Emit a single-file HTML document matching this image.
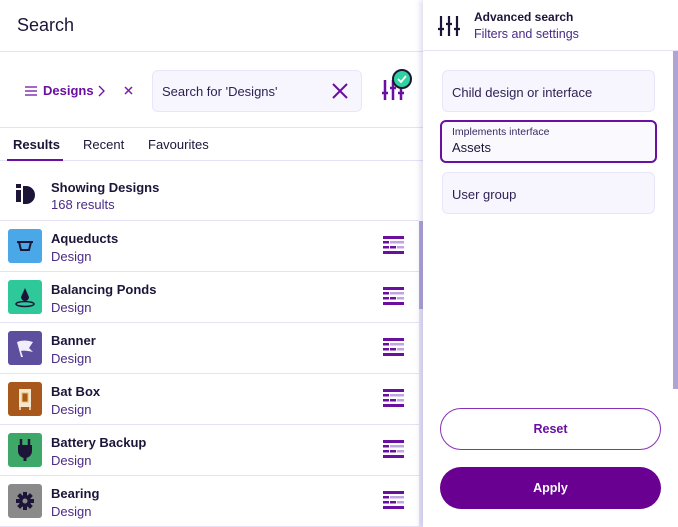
<!DOCTYPE html>
<html><head><style>
*{box-sizing:border-box;margin:0;padding:0}
body{width:678px;height:527px;overflow:hidden;background:#fff;font-family:"Liberation Sans",sans-serif;color:#1d1538;position:relative}
.abs{position:absolute}
.row{position:absolute;left:0;width:419px;height:51px;border-bottom:1px solid #e6e2f5}
.ic{position:absolute;left:8px;top:8px;width:34px;height:34px;border-radius:3px;display:flex;align-items:center;justify-content:center}
.nm{position:absolute;left:51px;top:10px;font-size:13px;font-weight:bold;color:#1d1538}
.ds{position:absolute;left:51px;top:28px;font-size:13px;color:#4a2a86}
.card{position:absolute;left:442px;width:213px;height:42px;background:#f7f6fe;border:1px solid #e8e6f8;border-radius:6px;font-size:13px;color:#2c1f52;padding:14px 9px}
</style></head><body>
<div class="abs" style="left:17px;top:15px;font-size:18px">Search</div>
<div class="abs" style="left:0;top:51px;width:423px;height:1px;background:#e6e2f5"></div>
<svg class="abs" style="left:25px;top:86px" width="12" height="10"><path d="M0 1H12M0 5H12M0 9H12" stroke="#6a0fa0" stroke-width="1.3"/></svg>
<div class="abs" style="left:43px;top:83px;font-size:13px;color:#6a0fa0;font-weight:bold">Designs</div>
<svg class="abs" style="left:98px;top:85px" width="8" height="12"><path d="M1 1L6 6L1 11" stroke="#6a0fa0" stroke-width="1.3" fill="none"/></svg>
<svg class="abs" style="left:124px;top:86px" width="9" height="9"><path d="M1 1L8 8M8 1L1 8" stroke="#7a1aa8" stroke-width="1.5"/></svg>
<div class="abs" style="left:152px;top:70px;width:210px;height:42px;background:#f7f6fe;border:1px solid #e8e6f8;border-radius:6px;font-size:13px;color:#2c1f52;padding:13px 9px">Search for 'Designs'</div>
<svg class="abs" style="left:331px;top:82px" width="18" height="18"><path d="M2 2L16 16M16 2L2 16" stroke="#6a0fa0" stroke-width="2"/></svg>
<svg class="abs" style="left:381px;top:76px" width="26" height="26"><g stroke="#6a0fa0" stroke-width="2.5"><path d="M4 4V24M12 4V24M20 4V24"/><path d="M1 17H7M9 12H15M17 17H23"/></g></svg>
<div class="abs" style="left:392px;top:69px;width:20px;height:20px;border-radius:50%;background:#2ed3a0;border:2px solid #1d1538"></div>
<svg class="abs" style="left:397px;top:74px" width="10" height="10"><path d="M1 5L4 8L9 2" stroke="#fff" stroke-width="1.8" fill="none"/></svg>
<div class="abs" style="left:0;top:127px;width:423px;height:1px;background:#e6e2f5"></div>
<div class="abs" style="left:13px;top:137px;font-size:13px;font-weight:bold">Results</div>
<div class="abs" style="left:83px;top:137px;font-size:13px">Recent</div>
<div class="abs" style="left:148px;top:137px;font-size:13px">Favourites</div>
<div class="abs" style="left:0;top:160px;width:423px;height:1px;background:#e6e2f5"></div>
<div class="abs" style="left:7px;top:159px;width:56px;height:2px;background:#6a0fa0"></div>
<svg class="abs" style="left:16px;top:184px" width="20" height="22"><rect x="0" y="0" width="5" height="4" fill="#1d1538"/><path d="M0 6H5V18H0Z M7 2H10A9 9 0 0 1 10 20H7Z" fill="#1d1538"/></svg>
<div class="abs" style="left:51px;top:180px;font-size:13px;font-weight:bold">Showing Designs</div>
<div class="abs" style="left:51px;top:197px;font-size:13px;color:#4a2a86">168 results</div>
<div class="abs" style="left:0;top:220px;width:419px;height:1px;background:#e6e2f5"></div>

<div class="row" style="top:221px"><div class="ic" style="background:#4aa8e8"><svg width="18" height="12"><path d="M1 2H17M3 2L5 10H13L15 2" stroke="#1d1538" stroke-width="2" fill="none"/></svg></div><div class="nm">Aqueducts</div><div class="ds">Design</div></div>
<div class="row" style="top:272px"><div class="ic" style="background:#2ec89a"><svg width="22" height="22"><path d="M11 2L7 11A4 4 0 0 0 15 11Z" fill="#1d1538"/><ellipse cx="11" cy="18" rx="9" ry="2.5" stroke="#1d1538" stroke-width="1.5" fill="none"/></svg></div><div class="nm">Balancing Ponds</div><div class="ds">Design</div></div>
<div class="row" style="top:323px"><div class="ic" style="background:#5e4e9e"><svg width="22" height="22"><path d="M3 5Q10 2 19 5L15 11L19 15Q10 13 7 14L9 20H7L3 5Z" fill="#f0eefc"/></svg></div><div class="nm">Banner</div><div class="ds">Design</div></div>
<div class="row" style="top:374px"><div class="ic" style="background:#a8581a"><svg width="18" height="24"><rect x="3" y="2" width="12" height="18" fill="#f5e6d0"/><rect x="6" y="6" width="6" height="9" fill="#a8581a" stroke="#e8c060"/><path d="M4 20V23M14 20V23" stroke="#f5e6d0" stroke-width="1.5"/></svg></div><div class="nm">Bat Box</div><div class="ds">Design</div></div>
<div class="row" style="top:425px"><div class="ic" style="background:#3ea868"><svg width="18" height="24"><path d="M5 1V7M13 1V7" stroke="#1d1538" stroke-width="2.5"/><path d="M2 7H16V13A7 7 0 0 1 2 13Z" fill="#1d1538"/><path d="M9 18V23" stroke="#1d1538" stroke-width="3"/></svg></div><div class="nm">Battery Backup</div><div class="ds">Design</div></div>
<div class="row" style="top:476px"><div class="ic" style="background:#8a8a8a"><svg width="22" height="22"><g stroke="#1d1538" stroke-width="4"><path d="M11 2V20M2 11H20M4.6 4.6L17.4 17.4M17.4 4.6L4.6 17.4"/></g><circle cx="11" cy="11" r="6" fill="#1d1538"/><circle cx="11" cy="11" r="2.5" fill="#8a8a8a"/></svg></div><div class="nm">Bearing</div><div class="ds">Design</div></div>

<svg width="0" height="0" style="position:absolute"><defs><g id="li"><g fill="#6a0fa0"><rect x="0" y="0" width="21" height="3"/><rect x="0" y="5" width="6" height="2.5"/><rect x="0" y="10" width="6" height="2.5"/><rect x="0" y="15" width="21" height="3"/><rect x="7" y="10" width="6" height="2.5"/></g><g fill="#c0a6e0"><rect x="7" y="5" width="14" height="2.5"/><rect x="14" y="10" width="7" height="2.5"/></g></g></defs></svg>
<svg class="abs" style="left:383px;top:236px" width="21" height="18"><use href="#li"/></svg>
<svg class="abs" style="left:383px;top:287px" width="21" height="18"><use href="#li"/></svg>
<svg class="abs" style="left:383px;top:338px" width="21" height="18"><use href="#li"/></svg>
<svg class="abs" style="left:383px;top:389px" width="21" height="18"><use href="#li"/></svg>
<svg class="abs" style="left:383px;top:440px" width="21" height="18"><use href="#li"/></svg>
<svg class="abs" style="left:383px;top:491px" width="21" height="18"><use href="#li"/></svg>
<div class="abs" style="left:419px;top:221px;width:4px;height:306px;background:#e8e4f6"></div>
<div class="abs" style="left:419px;top:221px;width:4px;height:88px;background:#b0a4d2"></div>

<div class="abs" style="left:423px;top:0;width:255px;height:527px;background:#fff;box-shadow:-3px 0 5px rgba(90,70,160,0.18)"></div>
<svg class="abs" style="left:438px;top:14px" width="22" height="24"><g stroke="#1d1538" stroke-width="2.2"><path d="M3 2V22M11 2V22M19 2V22"/><path d="M0 15H6M8 10H14M16 15H22"/></g></svg>
<div class="abs" style="left:474px;top:10px;font-size:12px;font-weight:bold">Advanced search</div>
<div class="abs" style="left:474px;top:27px;font-size:12.5px;color:#4a2a86">Filters and settings</div>
<div class="abs" style="left:423px;top:50px;width:255px;height:1px;background:#e6e2f5"></div>
<div class="abs" style="left:673px;top:51px;width:5px;height:338px;background:#b0a4d2"></div>
<div class="card" style="top:70px">Child design or interface</div>
<div class="card" style="top:120px;left:440px;width:217px;height:43px;border:2px solid #6a0fa0;background:#fafafe;padding:4px 10px"><div style="font-size:10.5px;color:#3a2a60">Implements interface</div><div style="font-size:13px;margin-top:2px;color:#1d1538">Assets</div></div>
<div class="card" style="top:172px">User group</div>
<div class="abs" style="left:440px;top:408px;width:221px;height:42px;border:1px solid #8a30b8;border-radius:21px;text-align:center;line-height:40px;font-size:12.5px;font-weight:bold;color:#6a0fa0">Reset</div>
<div class="abs" style="left:440px;top:467px;width:221px;height:42px;background:#6a0091;border-radius:21px;text-align:center;line-height:42px;font-size:12.5px;font-weight:bold;color:#fff">Apply</div>
</body></html>
